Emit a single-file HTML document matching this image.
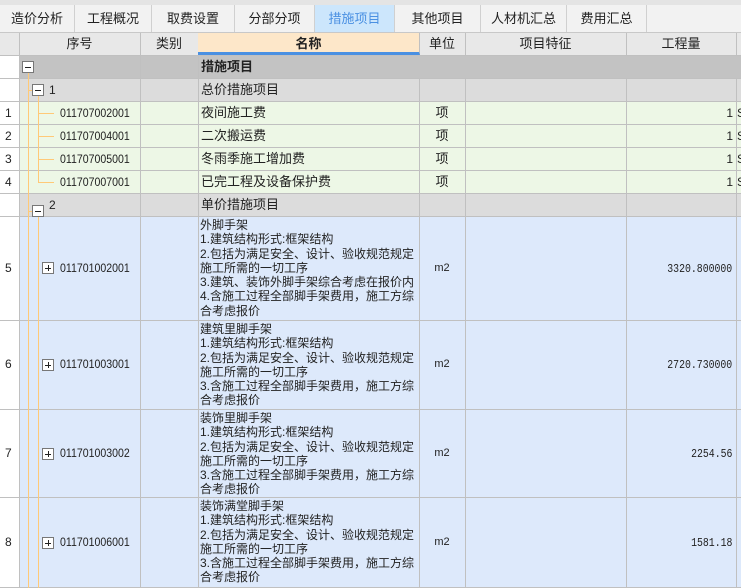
<!DOCTYPE html><html><head><meta charset="utf-8"><style>
*{box-sizing:border-box;margin:0;padding:0}
body{width:741px;height:588px;overflow:hidden;background:#fff;font-family:"Liberation Sans","Noto Sans CJK SC",sans-serif;font-size:12px;color:#222;position:relative}
.a{position:absolute}
.tabs{left:0;top:0;width:741px;height:33px;background:#f2f2f2;border-top:5px solid #e4e4e4;border-bottom:1px solid #c8c8c8}
.tab{position:absolute;top:0;height:27px;line-height:27px;text-align:center;font-size:13px;border-right:1px solid #d0d0d0;color:#222}
.row{position:absolute;left:0;width:741px;border-bottom:1px solid #c0c0c0}
.c{position:absolute;top:0;bottom:0;border-right:1px solid #c0c0c0;overflow:hidden;white-space:nowrap}
.n span{display:inline-block;font-size:12px;transform:scaleX(.88);transform-origin:left center}
.q span{display:inline-block;font-family:"Liberation Mono",monospace;font-size:12px;transform:scaleX(.82);transform-origin:right center}
.vl{position:absolute;background:#ffc977;width:1px}
.hl{position:absolute;background:#ffc977;height:1px}
.box{position:absolute;width:12px;height:12px;border:1px solid #777;background:#fff}
.box:before{content:"";position:absolute;left:2px;top:5px;width:6px;height:1px;background:#222}
.plus:after{content:"";position:absolute;left:5px;top:2px;width:1px;height:6px;background:#222}
.desc{white-space:normal;line-height:14.3px;padding:1px 0 0 2px;font-size:12px}
</style></head><body>
<div class="a tabs">
<div class="tab" style="left:0;width:75px">造价分析</div>
<div class="tab" style="left:75px;width:77px">工程概况</div>
<div class="tab" style="left:152px;width:83px">取费设置</div>
<div class="tab" style="left:235px;width:80px">分部分项</div>
<div class="tab" style="left:315px;width:80px;background:#cce6fc;color:#4a90e2">措施项目</div>
<div class="tab" style="left:395px;width:86px">其他项目</div>
<div class="tab" style="left:481px;width:86px">人材机汇总</div>
<div class="tab" style="left:567px;width:80px">费用汇总</div>
</div>
<div class="row" style="top:33px;height:23px;background:#e8e8e8;line-height:22px;font-size:13px;text-align:center">
<div class="c" style="left:0;width:20px"></div>
<div class="c" style="left:19px;width:122px">序号</div>
<div class="c" style="left:140px;width:59px">类别</div>
<div class="c" style="left:198px;width:222px;background:#fde7c9;font-weight:bold;border-bottom:3px solid #4a90e2">名称</div>
<div class="c" style="left:419px;width:47px">单位</div>
<div class="c" style="left:465px;width:162px">项目特征</div>
<div class="c" style="left:626px;width:111px">工程量</div>
</div>
<div class="row" style="top:56px;height:23px;background:#c3c3c3;line-height:22px">
<div class="c" style="left:0;width:20px;background:#fff"></div>
<div class="c" style="left:19px;width:122px"></div><div class="c" style="left:140px;width:59px"></div>
<div class="c" style="left:198px;width:222px;border-right:none;font-weight:bold;padding-left:3px;font-size:13px">措施项目</div>
</div>
<div class="row" style="top:79px;height:23px;background:#dcdcdc;line-height:22px">
<div class="c" style="left:0;width:20px;background:#fff"></div>
<div class="c" style="left:19px;width:122px;padding-left:30px">1</div><div class="c" style="left:140px;width:59px"></div>
<div class="c" style="left:198px;width:222px;padding-left:3px;font-size:13px">总价措施项目</div>
<div class="c" style="left:419px;width:47px"></div><div class="c" style="left:465px;width:162px"></div><div class="c" style="left:626px;width:111px"></div>
</div>
<div class="row" style="top:102px;height:23px;background:#edf7e6;line-height:22px">
<div class="c" style="left:0;width:20px;background:#fff;padding-left:5px">1</div>
<div class="c n" style="left:19px;width:122px;padding-left:41px"><span>011707002001</span></div><div class="c" style="left:140px;width:59px"></div>
<div class="c" style="left:198px;width:222px;padding-left:3px;font-size:13px">夜间施工费</div>
<div class="c" style="left:419px;width:47px;text-align:center;font-size:13px">项</div><div class="c" style="left:465px;width:162px"></div><div class="c" style="left:626px;width:111px;text-align:right;padding-right:3px">1</div><div class="c" style="left:737px;width:6px">S</div>
</div>
<div class="row" style="top:125px;height:23px;background:#edf7e6;line-height:22px">
<div class="c" style="left:0;width:20px;background:#fff;padding-left:5px">2</div>
<div class="c n" style="left:19px;width:122px;padding-left:41px"><span>011707004001</span></div><div class="c" style="left:140px;width:59px"></div>
<div class="c" style="left:198px;width:222px;padding-left:3px;font-size:13px">二次搬运费</div>
<div class="c" style="left:419px;width:47px;text-align:center;font-size:13px">项</div><div class="c" style="left:465px;width:162px"></div><div class="c" style="left:626px;width:111px;text-align:right;padding-right:3px">1</div><div class="c" style="left:737px;width:6px">S</div>
</div>
<div class="row" style="top:148px;height:23px;background:#edf7e6;line-height:22px">
<div class="c" style="left:0;width:20px;background:#fff;padding-left:5px">3</div>
<div class="c n" style="left:19px;width:122px;padding-left:41px"><span>011707005001</span></div><div class="c" style="left:140px;width:59px"></div>
<div class="c" style="left:198px;width:222px;padding-left:3px;font-size:13px">冬雨季施工增加费</div>
<div class="c" style="left:419px;width:47px;text-align:center;font-size:13px">项</div><div class="c" style="left:465px;width:162px"></div><div class="c" style="left:626px;width:111px;text-align:right;padding-right:3px">1</div><div class="c" style="left:737px;width:6px">S</div>
</div>
<div class="row" style="top:171px;height:23px;background:#edf7e6;line-height:22px">
<div class="c" style="left:0;width:20px;background:#fff;padding-left:5px">4</div>
<div class="c n" style="left:19px;width:122px;padding-left:41px"><span>011707007001</span></div><div class="c" style="left:140px;width:59px"></div>
<div class="c" style="left:198px;width:222px;padding-left:3px;font-size:13px">已完工程及设备保护费</div>
<div class="c" style="left:419px;width:47px;text-align:center;font-size:13px">项</div><div class="c" style="left:465px;width:162px"></div><div class="c" style="left:626px;width:111px;text-align:right;padding-right:3px">1</div><div class="c" style="left:737px;width:6px">S</div>
</div>
<div class="row" style="top:194px;height:23px;background:#dcdcdc;line-height:22px">
<div class="c" style="left:0;width:20px;background:#fff"></div>
<div class="c" style="left:19px;width:122px;padding-left:30px">2</div><div class="c" style="left:140px;width:59px"></div>
<div class="c" style="left:198px;width:222px;padding-left:3px;font-size:13px">单价措施项目</div>
<div class="c" style="left:419px;width:47px"></div><div class="c" style="left:465px;width:162px"></div><div class="c" style="left:626px;width:111px"></div>
</div>
<div class="row" style="top:217px;height:104px;background:#dde9fb;line-height:102px">
<div class="c" style="left:0;width:20px;background:#fff;padding-left:5px">5</div>
<div class="c n" style="left:19px;width:122px;padding-left:41px"><span>011701002001</span></div><div class="c" style="left:140px;width:59px"></div>
<div class="c desc" style="left:198px;width:222px">外脚手架<br>1.建筑结构形式:框架结构<br>2.包括为满足安全、设计、验收规范规定施工所需的一切工序<br>3.建筑、装饰外脚手架综合考虑在报价内<br>4.含施工过程全部脚手架费用，施工方综合考虑报价</div>
<div class="c" style="left:419px;width:47px;text-align:center;font-size:11px">m2</div><div class="c" style="left:465px;width:162px"></div><div class="c q" style="left:626px;width:111px;text-align:right;padding-right:4px"><span>3320.800000</span></div>
</div>
<div class="row" style="top:321px;height:89px;background:#dde9fb;line-height:87px">
<div class="c" style="left:0;width:20px;background:#fff;padding-left:5px">6</div>
<div class="c n" style="left:19px;width:122px;padding-left:41px"><span>011701003001</span></div><div class="c" style="left:140px;width:59px"></div>
<div class="c desc" style="left:198px;width:222px">建筑里脚手架<br>1.建筑结构形式:框架结构<br>2.包括为满足安全、设计、验收规范规定施工所需的一切工序<br>3.含施工过程全部脚手架费用，施工方综合考虑报价</div>
<div class="c" style="left:419px;width:47px;text-align:center;font-size:11px">m2</div><div class="c" style="left:465px;width:162px"></div><div class="c q" style="left:626px;width:111px;text-align:right;padding-right:4px"><span>2720.730000</span></div>
</div>
<div class="row" style="top:410px;height:88px;background:#dde9fb;line-height:86px">
<div class="c" style="left:0;width:20px;background:#fff;padding-left:5px">7</div>
<div class="c n" style="left:19px;width:122px;padding-left:41px"><span>011701003002</span></div><div class="c" style="left:140px;width:59px"></div>
<div class="c desc" style="left:198px;width:222px">装饰里脚手架<br>1.建筑结构形式:框架结构<br>2.包括为满足安全、设计、验收规范规定施工所需的一切工序<br>3.含施工过程全部脚手架费用，施工方综合考虑报价</div>
<div class="c" style="left:419px;width:47px;text-align:center;font-size:11px">m2</div><div class="c" style="left:465px;width:162px"></div><div class="c q" style="left:626px;width:111px;text-align:right;padding-right:4px"><span>2254.56</span></div>
</div>
<div class="row" style="top:498px;height:90px;background:#dde9fb;line-height:88px">
<div class="c" style="left:0;width:20px;background:#fff;padding-left:5px">8</div>
<div class="c n" style="left:19px;width:122px;padding-left:41px"><span>011701006001</span></div><div class="c" style="left:140px;width:59px"></div>
<div class="c desc" style="left:198px;width:222px">装饰满堂脚手架<br>1.建筑结构形式:框架结构<br>2.包括为满足安全、设计、验收规范规定施工所需的一切工序<br>3.含施工过程全部脚手架费用，施工方综合考虑报价</div>
<div class="c" style="left:419px;width:47px;text-align:center;font-size:11px">m2</div><div class="c" style="left:465px;width:162px"></div><div class="c q" style="left:626px;width:111px;text-align:right;padding-right:4px"><span>1581.18</span></div>
</div>
<div class="vl" style="left:28px;top:73px;height:515px"></div>
<div class="hl" style="left:28px;top:90px;width:5px"></div>
<div class="hl" style="left:28px;top:211px;width:5px"></div>
<div class="vl" style="left:38px;top:96px;height:87px"></div>
<div class="hl" style="left:38px;top:113px;width:16px"></div>
<div class="hl" style="left:38px;top:136px;width:16px"></div>
<div class="hl" style="left:38px;top:159px;width:16px"></div>
<div class="hl" style="left:38px;top:182px;width:16px"></div>
<div class="vl" style="left:38px;top:217px;height:371px"></div>
<div class="box" style="left:22px;top:61px"></div>
<div class="box" style="left:32px;top:84px"></div>
<div class="box" style="left:32px;top:205px"></div>
<div class="box plus" style="left:42px;top:262px"></div>
<div class="box plus" style="left:42px;top:359px"></div>
<div class="box plus" style="left:42px;top:448px"></div>
<div class="box plus" style="left:42px;top:537px"></div>
</body></html>
